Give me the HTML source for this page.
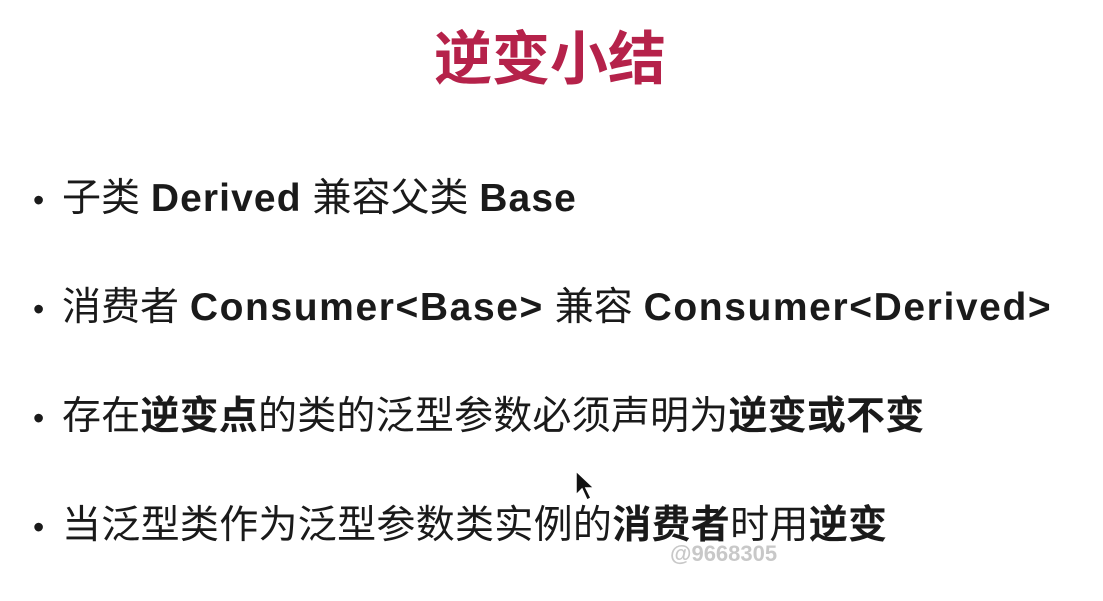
<!DOCTYPE html>
<html><head><meta charset="utf-8"><style>
body{margin:0;width:1103px;height:601px;background:#fff;overflow:hidden;position:relative;font-family:"Liberation Sans","Noto Sans CJK SC",sans-serif;color:#1a1a1a}
.t{position:absolute;top:25px;left:0;width:1100px;text-align:center;font-size:58px;font-weight:bold;color:#b5224a;line-height:70px}
.l{position:absolute;left:33px;font-size:39px;line-height:50px;white-space:nowrap}
.l span.d{display:inline-block;width:29px;font-size:32px}
b{font-weight:bold}
i{font-style:normal;font-weight:bold;letter-spacing:1.1px}
i.x{letter-spacing:1.6px}
.w{position:absolute;left:670px;top:541px;font-size:22px;color:#c8c8c8;font-weight:bold}
</style></head><body>
<div class="t">逆变小结</div>
<div class="l" style="top:174px"><span class="d">•</span>子类 <i>Derived</i> 兼容父类 <i>Base</i></div>
<div class="l" style="top:283px"><span class="d">•</span>消费者 <i class="x">Consumer&lt;Base&gt;</i> 兼容 <i class="x">Consumer&lt;Derived&gt;</i></div>
<div class="l" style="top:392px;letter-spacing:0.2px"><span class="d">•</span>存在<b>逆变点</b>的类的泛型参数必须声明为<b>逆变或不变</b></div>
<div class="l" style="top:501px;letter-spacing:0.3px"><span class="d">•</span>当泛型类作为泛型参数类实例的<b>消费者</b>时用<b>逆变</b></div>
<svg style="position:absolute;left:574px;top:469px" width="24" height="34" viewBox="0 0 24 34"><path d="M2 2 L2 26 L8 20 L13 31 L17 29 L12 19 L20 19 Z" fill="#111" stroke="#fff" stroke-width="1.5"/></svg>
<div class="w">@9668305</div>
</body></html>
